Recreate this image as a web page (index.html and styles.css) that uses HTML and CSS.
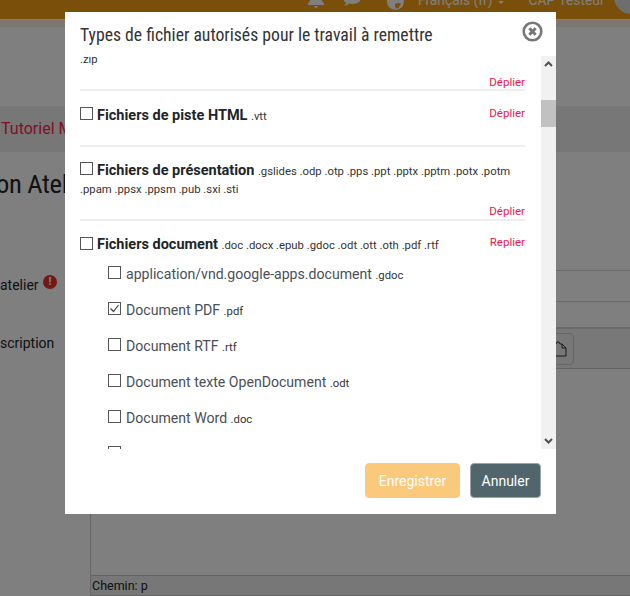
FILE: index.html
```html
<!DOCTYPE html>
<html lang="fr">
<head>
<meta charset="utf-8">
<title>Types de fichier</title>
<link rel="stylesheet" href="styles.css">
</head>
<body>
<div class="page">
  <header class="topbar">
    <svg class="ic-bell" width="16" height="18" viewBox="0 0 16 18"><path d="M8 0C5 0 3 2.500 3 6c0 4-1 5.500-3 7.500V15h16v-1.500C14 11.500 13 10 13 6c0-3.500-2-6-5-6zM6 16h4a2 2 0 0 1-4 0z" fill="#fff"/></svg>
    <svg class="ic-chat" width="18" height="16" viewBox="0 0 18 16"><path d="M9 0c5 0 9 2.500 9 6s-4 6-9 6c-1 0-2-.1-3-.4C4.500 13 3 14 1 14c1-1 1.800-2 2-3.400C1.200 9.500 0 7.900 0 6c0-3.500 4-6 9-6z" fill="#fff"/></svg>
    <svg class="ic-globe" width="17" height="17" viewBox="0 0 17 17"><circle cx="8.500" cy="8.500" r="8.500" fill="#fff"/><path d="M8 11l3-1 3 .5-2.500 4.500-2.500 .5-1-2z" fill="#f59e14"/></svg>
    <span class="lang">Français (fr)</span>
    <span class="caret"></span>
    <span class="user">CAP Testeur</span>
    <span class="avatar"></span>
  </header>
  <div class="strip"></div>
  <div class="spacer"></div>
  <div class="crumb">Tutoriel Moodle</div>
  <h1 class="pagetitle">on Atelier</h1>
  <div class="form-row first">
    <div class="label">atelier <span class="req">!</span></div>
    <div class="field"></div>
  </div>
  <div class="form-row editor-row">
    <div class="label desc">scription</div>
    <div class="editor">
      <div class="toolbar">
        <span class="tool">
          <svg width="14" height="18" viewBox="0 0 14 18"><path d="M1 4h2l1-2h2l1 2h2l4 4v8H3" fill="none" stroke="#333" stroke-width="1"/><path d="M9 4v4h4" fill="none" stroke="#333" stroke-width="1"/></svg>
        </span>
      </div>
      <div class="editarea"></div>
      <div class="status">Chemin: p</div>
    </div>
  </div>
</div>

<div class="overlay">
  <section class="modal">
    <div class="modal-head">
      <h2 class="modal-title">Types de fichier autorisés pour le travail à remettre</h2>
      <svg class="close" width="21" height="21" viewBox="0 0 21 21">
        <circle cx="10.500" cy="10.500" r="8.800" fill="none" stroke="#777" stroke-width="2.600"/>
        <path d="M7.300 7.300l6.400 6.400M13.700 7.300l-6.400 6.400" stroke="#777" stroke-width="3" fill="none"/>
      </svg>
    </div>
    <div class="scrollbox">
      <div class="scroll-content">
        <div class="group g-zip">
          <div class="exts">.zip</div>
          <div class="toggle-line"><a class="toggle">Déplier</a></div>
        </div>
        <div class="group g-vtt">
          <div class="line">
            <div class="main"><span class="box"></span><b class="name">Fichiers de piste HTML</b> <span class="exts">.vtt</span></div>
            <a class="toggle">Déplier</a>
          </div>
        </div>
        <div class="group g-pres">
          <div class="main wrap"><span class="box"></span><b class="name">Fichiers de présentation</b> <span class="exts">.gslides .odp .otp .pps .ppt .pptx .pptm .potx .potm .ppam .ppsx .ppsm .pub .sxi .sti</span></div>
          <div class="toggle-line"><a class="toggle">Déplier</a></div>
        </div>
        <div class="group g-doc">
          <div class="line">
            <div class="main"><span class="box"></span><b class="name">Fichiers document</b> <span class="exts">.doc .docx .epub .gdoc .odt .ott .oth .pdf .rtf</span></div>
            <a class="toggle">Replier</a>
          </div>
          <ul class="items">
            <li><span class="box"></span><span class="iname">application/vnd.google-apps.document</span> <span class="exts">.gdoc</span></li>
            <li><span class="box"><svg width="13" height="13" viewBox="0 0 13 13"><path d="M2.500 6.500l3 3 5-6.500" fill="none" stroke="#444" stroke-width="1.200"/></svg></span><span class="iname">Document PDF</span> <span class="exts">.pdf</span></li>
            <li><span class="box"></span><span class="iname">Document RTF</span> <span class="exts">.rtf</span></li>
            <li><span class="box"></span><span class="iname">Document texte OpenDocument</span> <span class="exts">.odt</span></li>
            <li><span class="box"></span><span class="iname">Document Word</span> <span class="exts">.doc</span></li>
            <li class="clipped"><span class="box"></span><span class="iname">Document Word OpenXML</span> <span class="exts">.docx</span></li>
          </ul>
        </div>
      </div>
      <div class="scrollbar">
        <svg class="arrow" width="15" height="16" viewBox="0 0 15 16"><path d="M4 10l3.500-3.500L11 10" fill="none" stroke="#505050" stroke-width="2"/></svg>
        <div class="thumb"></div>
        <svg class="arrow bottom" width="15" height="16" viewBox="0 0 15 16"><path d="M4 6l3.500 3.500L11 6" fill="none" stroke="#505050" stroke-width="2"/></svg>
      </div>
    </div>
    <div class="modal-foot">
      <button class="btn save" type="button">Enregistrer</button>
      <button class="btn cancel" type="button">Annuler</button>
    </div>
  </section>
</div>
</body>
</html>
```

FILE: styles.css
```css
* { box-sizing: border-box; }
html, body { margin: 0; padding: 0; height: 596px; overflow: hidden; }
body { font-family: Roboto, "Liberation Sans", sans-serif; font-size: 14px; color: #212529; background: #fff; position: relative; width: 630px; }
.page { height: 596px; overflow: hidden; }

.topbar { height: 19px; background: #f59e14; display: flex; align-items: flex-start; padding-left: 308px; overflow: hidden; color: #fff; }
.ic-bell { margin-top: -10px; flex: none; }
.ic-chat { margin-top: -8px; margin-left: 19px; flex: none; }
.ic-globe { margin-top: -7px; margin-left: 26px; flex: none; }
.lang { margin-top: -10px; margin-left: 14px; line-height: 20px; white-space: nowrap; font-size: 13.8px; }
.caret { margin-top: 1px; margin-left: 5px; border: 3px solid transparent; border-top-color: #fff; flex: none; }
.user { margin-top: -10px; margin-left: 25px; line-height: 20px; white-space: nowrap; font-size: 13.8px; }
.avatar { width: 34px; height: 34px; border-radius: 50%; background: #ddd; margin-top: -20px; margin-left: 9px; flex: none; }
.strip { height: 8px; background: #f7eedd; border-top: 1px solid #ffffff; }
.spacer { height: 79px; }
.crumb { height: 46px; background: #eeeeee; color: #ff2050; font-size: 16px; line-height: 46px; padding-left: 1px; }
.pagetitle { margin: 0; height: 118px; padding-top: 16px; text-indent: -4px; font-family: "Roboto Condensed", Roboto, sans-serif; font-stretch: 75%; font-size: 26.5px; letter-spacing: -.3px; font-weight: 400; line-height: 32px; color: #212529; }

.form-row { display: flex; }
.form-row.first { height: 57px; }
.label { width: 90px; flex: none; color: #212529; font-size: 14px; }
.form-row.first .label { padding-top: 5px; }
.req { display: inline-block; width: 14px; height: 14px; margin-left: 1px; border-radius: 50%; background: #e53030; color: #fff; font-size: 11px; font-weight: 700; line-height: 14px; text-align: center; vertical-align: 5px; }
.field { flex: 1; height: 32px; border-top: 1px solid #d4d4d4; border-bottom: 1px solid #d4d4d4; }
.form-row.editor-row { height: 269px; }
.label.desc { padding-top: 8px; }
.editor { flex: 1; border-left: 1px solid #cfcfcf; display: flex; flex-direction: column; height: 269px; }
.toolbar { height: 42px; background: #f0f0f0; border-top: 2px solid #d4d4d4; border-bottom: 1px solid #c8c8c8; padding: 4px 56px 0 0; display: flex; justify-content: flex-end; }
.tool { width: 60px; height: 32px; border: 1px solid #ccc; border-radius: 4px; display: flex; align-items: center; justify-content: flex-end; padding-right: 6px; }
.editarea { flex: 1; background: #fff; }
.status { height: 21px; background: #eeeeee; border-top: 1px solid #c8c8c8; border-bottom: 1px solid #c8c8c8; font-size: 12.5px; line-height: 19px; padding-left: 1px; color: #222; }

.overlay { position: absolute; inset: 0; background: rgba(0,0,0,.5); }
.modal { position: absolute; left: 65px; top: 12px; width: 491px; height: 502px; background: #fff; display: flex; flex-direction: column; }
.modal-head { height: 44px; padding: 13px 13px 0 15px; display: flex; justify-content: space-between; flex: none; }
.modal-title { margin: 0; font-family: "Roboto Condensed", Roboto, sans-serif; font-stretch: 75%; font-size: 17.7px; font-weight: 400; line-height: 20px; color: #333; white-space: nowrap; }
.close { margin-top: -4px; flex: none; }

.scrollbox { height: 393px; display: flex; flex: none; }
.scroll-content { flex: 1; overflow: hidden; padding: 0 16px 0 15px; }
.scrollbar { width: 15px; flex: none; background: #f1f1f1; display: flex; flex-direction: column; position: relative; }
.arrow { flex: none; }
.thumb { height: 27px; margin-top: 28px; background: #c1c1c1; }
.arrow.bottom { margin-top: auto; }

.group { border-bottom: 2px solid #eee; }
.g-zip { margin-top: -4px; height: 39px; }
.g-vtt { height: 56px; padding-top: 14px; }
.g-vtt .main { margin-top: 1px; }
.g-pres { height: 74px; padding-top: 14px; }
.g-doc { border-bottom: 0; padding-top: 13px; }
.g-doc .main { margin-top: 1px; }
.exts { font-size: 11.3px; line-height: 1; color: #333; font-weight: 400; }
.g-zip .exts { display: block; line-height: 16px; }
.line { display: flex; justify-content: space-between; align-items: flex-start; }
.main { line-height: 18px; }
.name { font-size: 14.5px; line-height: 1; font-weight: 700; color: #212529; }
.toggle { font-size: 11.5px; line-height: 16px; color: #e8174f; }
.toggle-line { text-align: right; line-height: 16px; }
.g-zip .toggle-line { margin-top: 5px; }
.g-pres .toggle-line { margin-top: 5px; }
.box { display: inline-block; width: 13px; height: 13px; border: 1px solid #555; background: #fff; margin-right: 4px; vertical-align: -1px; position: relative; }
.box svg { position: absolute; left: -1px; top: -1px; }
.g-vtt .box, .g-pres .box { vertical-align: 0; }
.items { list-style: none; margin: 0; padding: 12px 0 0 28px; }
.items .box { margin-right: 5px; vertical-align: 0; }
.items li { height: 36px; line-height: 18px; white-space: nowrap; }
.iname { font-size: 14.1px; line-height: 1; color: #495057; }
.clipped .iname, .clipped .exts { vertical-align: -2px; }

.modal-foot { flex: 1; display: flex; justify-content: flex-end; align-items: flex-start; gap: 10px; padding: 14px 15px 0 0; }
.btn { height: 35px; border-radius: 4px; font-family: inherit; font-size: 14px; color: #fff; border: 1px solid transparent; padding: 0; }
.save { width: 95px; background: #fbc97b; border-color: #fbc97b; }
.cancel { width: 71px; background: #51656d; border-color: #9aa5aa; }
```
